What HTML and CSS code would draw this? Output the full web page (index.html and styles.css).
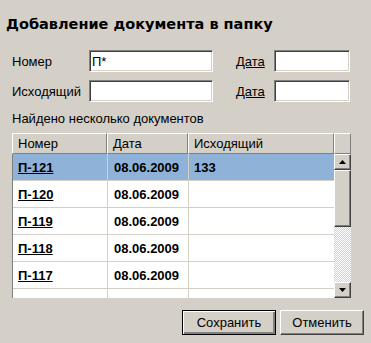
FILE: index.html
```html
<!DOCTYPE html>
<html lang="ru">
<head>
<meta charset="UTF-8">
<title>Добавление документа в папку</title>
<link rel="stylesheet" href="styles.css">
</head>
<body>
<div class="dialog">
<h1>Добавление документа в папку</h1>
<div class="fields">
    <label for="num">Номер</label>
    <input type="text" id="num" value="П*">
    <span></span>
    <a href="#" class="link">Дата</a>
    <input type="text" id="date1">
    <label for="out">Исходящий</label>
    <input type="text" id="out">
    <span></span>
    <a href="#" class="link">Дата</a>
    <input type="text" id="date2">
</div>
<div class="found">Найдено несколько документов</div>
<div class="list">
    <div class="head">
        <div class="hcell c1">Номер</div>
        <div class="hcell c2">Дата</div>
        <div class="hcell c3">Исходящий</div>
        <div class="hcell corner"></div>
    </div>
    <div class="body">
        <div class="rows">
            <div class="row sel"><div class="cell c1"><a href="#">П-121</a></div><div class="cell c2">08.06.2009</div><div class="cell c3">133</div></div>
            <div class="row"><div class="cell c1"><a href="#">П-120</a></div><div class="cell c2">08.06.2009</div><div class="cell c3"></div></div>
            <div class="row"><div class="cell c1"><a href="#">П-119</a></div><div class="cell c2">08.06.2009</div><div class="cell c3"></div></div>
            <div class="row"><div class="cell c1"><a href="#">П-118</a></div><div class="cell c2">08.06.2009</div><div class="cell c3"></div></div>
            <div class="row"><div class="cell c1"><a href="#">П-117</a></div><div class="cell c2">08.06.2009</div><div class="cell c3"></div></div>
            <div class="row"><div class="cell c1"></div><div class="cell c2"></div><div class="cell c3"></div></div>
        </div>
        <div class="scroll">
            <div class="sbtn"><svg width="7" height="4" viewBox="0 0 7 4"><polygon points="3.5,0 7,4 0,4" fill="#000"/></svg></div>
            <div class="thumb"></div>
            <div class="track"></div>
            <div class="sbtn"><svg width="7" height="4" viewBox="0 0 7 4"><polygon points="0,0 7,0 3.5,4" fill="#000"/></svg></div>
        </div>
    </div>
</div>
<div class="buttons">
    <button type="button" class="btn default">Сохранить</button>
    <button type="button" class="btn">Отменить</button>
</div>
</div>
</body>
</html>
```

FILE: styles.css
```css
body{
    margin:0;
    background:#d4d0c8;
    font-family:"Liberation Sans",Arial,sans-serif;
    font-size:13px;
    color:#000;
}
.dialog{
    width:371px;
    height:343px;
    overflow:hidden;
}
h1{
    margin:15px 0 0 6px;
    font-family:"DejaVu Sans",sans-serif;
    font-size:14.5px;
    line-height:18px;
    font-weight:bold;
}
.fields{
    display:grid;
    grid-template-columns:77px 124px 23px 38px 76px;
    grid-auto-rows:22px;
    row-gap:8px;
    align-items:center;
    margin:17px 0 0 12px;
}
.fields label{white-space:nowrap;}
.link{color:#000;text-decoration:underline;}
input{
    box-sizing:border-box;
    width:100%;
    height:22px;
    margin:0;
    padding:0 2px;
    font:13px "Liberation Sans",Arial,sans-serif;
    background:#fff;
    border:1px solid;
    border-color:#808080 #fff #fff #808080;
    box-shadow:inset 1px 1px #404040,inset -1px -1px #d4d0c8;
    outline:none;
}
.found{
    margin:9px 0 0 12px;
    line-height:15px;
}
.list{
    margin:7px 0 0 12px;
    width:339px;
}
.head{display:flex;height:21px;}
.hcell{
    box-sizing:border-box;
    height:21px;
    padding:2px 0 0 5px;
    background:#d4d0c8;
    border:1px solid;
    border-color:#fff #808080 #808080 #fff;
    white-space:nowrap;
}
.head .c1{width:95px;}
.head .c2{width:81px;}
.head .c3{width:146px;}
.head .corner{width:17px;padding:0;}
.body{
    display:flex;
    height:144px;
    border-left:1px solid #808080;
}
.rows{
    width:321px;
    height:144px;
    overflow:hidden;
    background:#fff;
}
.row{
    display:flex;
    height:27px;
    box-sizing:border-box;
    border-bottom:1px solid #d4d0c8;
    font-weight:bold;
}
.row.sel{background:#8fb2d8;}
.cell{
    box-sizing:border-box;
    padding:6px 0 0 5px;
    border-right:1px solid #d4d0c8;
    white-space:nowrap;
}
.cell a{color:#000;text-decoration:underline;}
.row .c1{width:95px;}
.row .c2{width:81px;padding-left:6px;}
.row .c3{width:145px;border-right:none;}
.scroll{
    display:flex;
    flex-direction:column;
    width:17px;
}
.sbtn,.thumb{
    box-sizing:border-box;
    background:#d4d0c8;
    border:1px solid;
    border-color:#fff #404040 #404040 #fff;
    box-shadow:inset -1px -1px #808080;
}
.sbtn{
    height:16px;
    display:flex;
    align-items:center;
    justify-content:center;
}
.thumb{height:57px;}
.track{
    flex:1;
    background:repeating-conic-gradient(#fff 0 25%,#d4d0c8 0 50%) 0 0/2px 2px;
}
.buttons{
    display:flex;
    justify-content:flex-end;
    gap:4px;
    margin:12px 7px 0 0;
}
.btn{
    box-sizing:border-box;
    height:25px;
    padding:0;
    font:13px "Liberation Sans",Arial,sans-serif;
    color:#000;
    background:#d4d0c8;
    border:1px solid;
    border-color:#fff #404040 #404040 #fff;
    box-shadow:inset -1px -1px #808080;
}
.btn.default{
    width:94px;
    border:1px solid #000;
    box-shadow:inset 1px 1px #fff,inset -2px -2px #808080;
}
.btn:not(.default){width:84px;}
```
